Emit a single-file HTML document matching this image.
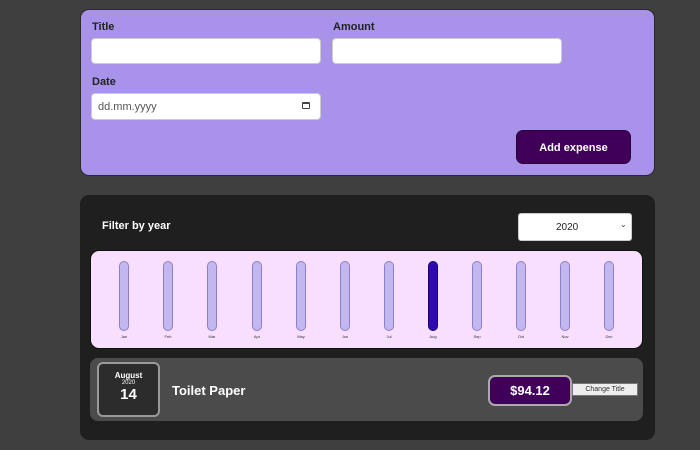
<!DOCTYPE html>
<html><head><style>
*{box-sizing:border-box;margin:0;padding:0}
body{width:700px;height:450px;background:#3f3f3f;font-family:"Liberation Sans",sans-serif;position:relative;overflow:hidden}
.a{position:absolute}
.card1{left:80px;top:9px;width:575px;height:167px;background:#a892ea;border-radius:9px;border:1px solid #2a2a2a}
.lbl{font-size:11px;font-weight:bold;color:#222}
.inp{background:#fff;border-radius:4px;border:1px solid #ccc}
.btn{left:516px;top:130px;width:115px;height:34px;background:#40005a;border-radius:7px;color:#fff;font-weight:bold;font-size:11px;text-align:center;line-height:34px;border:1px solid #2a0038}
.card2{left:80px;top:195px;width:575px;height:245px;background:#1f1f1f;border-radius:9px}
.chart{left:90px;top:250px;width:553px;height:99px;background:#f8dfff;border-radius:9px;border:1px solid #111}
.bar{top:261px;width:10px;height:70px;background:#c3b7f0;border:1px solid #8c80c8;border-radius:5px}
.ml{top:334px;font-size:4px;width:30px;text-align:center;color:#333}
</style></head><body>
<div class="a card1"></div>
<div class="a lbl" style="left:92px;top:21px">Title</div>
<div class="a lbl" style="left:333px;top:21px">Amount</div>
<div class="a inp" style="left:91px;top:38px;width:230px;height:26px"></div>
<div class="a inp" style="left:332px;top:38px;width:230px;height:26px"></div>
<div class="a lbl" style="left:92px;top:76px">Date</div>
<div class="a inp" style="left:91px;top:93px;width:230px;height:27px"></div>
<div class="a" style="left:98px;top:101px;font-size:11px;color:#555">dd.mm.yyyy</div>
<div class="a" style="left:302px;top:102px;width:8px;height:7px;border:1px solid #444;border-top-width:2px;border-radius:1px"></div>
<div class="a btn">Add expense</div>
<div class="a card2"></div>
<div class="a" style="left:102px;top:220px;color:#fff;font-weight:bold;font-size:11px">Filter by year</div>
<div class="a inp" style="left:518px;top:213px;width:114px;height:28px;border-radius:3px"></div>
<div class="a" style="left:556px;top:222px;font-size:10px;color:#222">2020</div>
<div class="a" style="left:620px;top:220px;font-size:8px;color:#444">⌄</div>
<div class="a chart"></div>
<div class="a bar" style="left:119px"></div>
<div class="a bar" style="left:163px"></div>
<div class="a bar" style="left:207px"></div>
<div class="a bar" style="left:252px"></div>
<div class="a bar" style="left:296px"></div>
<div class="a bar" style="left:340px"></div>
<div class="a bar" style="left:384px"></div>
<div class="a bar" style="left:428px;background:#2e0ab0;border-color:#1a0070"></div>
<div class="a bar" style="left:472px"></div>
<div class="a bar" style="left:516px"></div>
<div class="a bar" style="left:560px"></div>
<div class="a bar" style="left:604px"></div>
<div class="a ml" style="left:109px">Jan</div><div class="a ml" style="left:153px">Feb</div><div class="a ml" style="left:197px">Mar</div><div class="a ml" style="left:242px">Apr</div><div class="a ml" style="left:286px">May</div><div class="a ml" style="left:330px">Jun</div><div class="a ml" style="left:374px">Jul</div><div class="a ml" style="left:418px">Aug</div><div class="a ml" style="left:462px">Sep</div><div class="a ml" style="left:506px">Oct</div><div class="a ml" style="left:550px">Nov</div><div class="a ml" style="left:594px">Dec</div>
<div class="a" style="left:90px;top:358px;width:553px;height:63px;background:#4b4b4b;border-radius:8px"></div>
<div class="a" style="left:97px;top:362px;width:63px;height:55px;background:#2c2c2c;border:2px solid #999;border-radius:6px;color:#fff;text-align:center">
<div style="font-size:8px;font-weight:bold;margin-top:7px">August</div>
<div style="font-size:6px">2020</div>
<div style="font-size:15px;font-weight:bold">14</div></div>
<div class="a" style="left:172px;top:383px;color:#fff;font-weight:bold;font-size:13px">Toilet Paper</div>
<div class="a" style="left:488px;top:375px;width:84px;height:31px;background:#40005a;border:2px solid #aaa;border-radius:7px;color:#fff;font-weight:bold;font-size:13px;text-align:center;line-height:27px">$94.12</div>
<div class="a" style="left:572px;top:383px;width:66px;height:13px;background:#eee;border:1px solid #777;font-size:7px;color:#333;text-align:center;line-height:11px">Change Title</div>
</body></html>
